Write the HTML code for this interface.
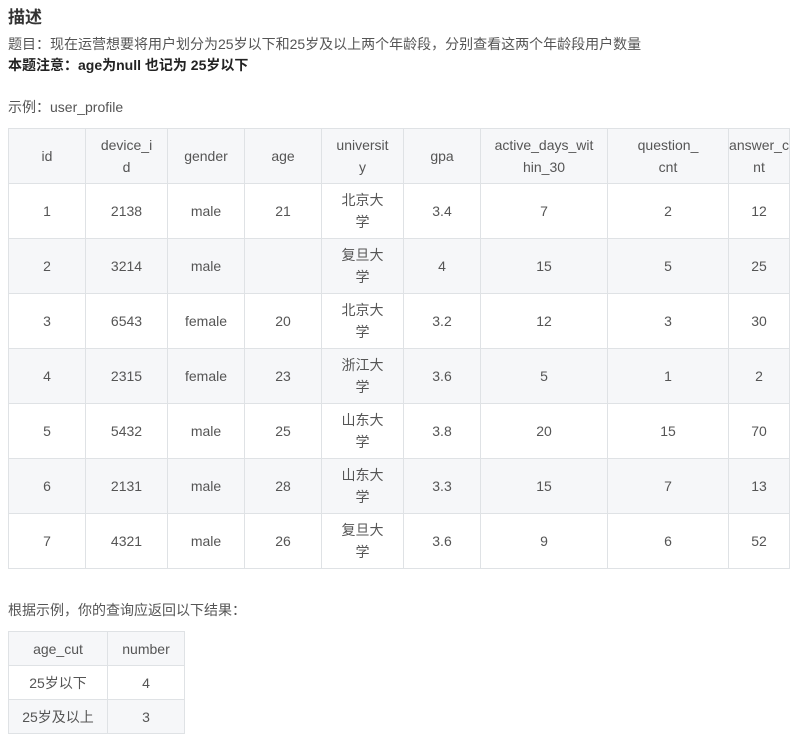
<!DOCTYPE html>
<html><head><meta charset="utf-8"><style>
body{margin:0;background:#fff;font-family:"Liberation Sans","Noto Sans CJK SC",sans-serif;color:#555;font-size:14px}
.t{position:absolute;left:8px;white-space:nowrap}
table{position:absolute;left:8px;border-collapse:collapse;table-layout:fixed}
td{border:1px solid #dfe2e5;text-align:center;padding:0;line-height:22px;color:#555;font-size:14px;overflow:hidden;white-space:nowrap}
tr.s td{background:#f6f7f9}
#a tr{height:55px}
#b tr{height:34px}
</style></head><body>
<div class="t" style="top:3px;font-size:17px;font-weight:bold;color:#333">描述</div>
<div class="t" style="top:34px">题目：现在运营想要将用户划分为25岁以下和25岁及以上两个年龄段，分别查看这两个年龄段用户数量</div>
<div class="t" style="top:55px;font-weight:bold;color:#222">本题注意：age为null 也记为 25岁以下</div>
<div class="t" style="top:97px">示例：user_profile</div>
<table id="a" style="top:128px;width:781px">
<colgroup><col style="width:77px"><col style="width:82px"><col style="width:77px"><col style="width:77px"><col style="width:82px"><col style="width:77px"><col style="width:127px"><col style="width:121px"><col style="width:61px"></colgroup>
<tr class="s"><td>id</td><td>device_i<br>d</td><td>gender</td><td>age</td><td>universit<br>y</td><td>gpa</td><td>active_days_wit<br>hin_30</td><td>question_<br>cnt</td><td>answer_c<br>nt</td></tr>
<tr><td>1</td><td>2138</td><td>male</td><td>21</td><td>北京大<br>学</td><td>3.4</td><td>7</td><td>2</td><td>12</td></tr>
<tr class="s"><td>2</td><td>3214</td><td>male</td><td></td><td>复旦大<br>学</td><td>4</td><td>15</td><td>5</td><td>25</td></tr>
<tr><td>3</td><td>6543</td><td>female</td><td>20</td><td>北京大<br>学</td><td>3.2</td><td>12</td><td>3</td><td>30</td></tr>
<tr class="s"><td>4</td><td>2315</td><td>female</td><td>23</td><td>浙江大<br>学</td><td>3.6</td><td>5</td><td>1</td><td>2</td></tr>
<tr><td>5</td><td>5432</td><td>male</td><td>25</td><td>山东大<br>学</td><td>3.8</td><td>20</td><td>15</td><td>70</td></tr>
<tr class="s"><td>6</td><td>2131</td><td>male</td><td>28</td><td>山东大<br>学</td><td>3.3</td><td>15</td><td>7</td><td>13</td></tr>
<tr><td>7</td><td>4321</td><td>male</td><td>26</td><td>复旦大<br>学</td><td>3.6</td><td>9</td><td>6</td><td>52</td></tr>
</table>
<div class="t" style="top:600px">根据示例，你的查询应返回以下结果：</div>
<table id="b" style="top:631px;width:176px">
<colgroup><col style="width:99px"><col style="width:77px"></colgroup>
<tr class="s"><td>age_cut</td><td>number</td></tr>
<tr><td>25岁以下</td><td>4</td></tr>
<tr class="s"><td>25岁及以上</td><td>3</td></tr>
</table>
</body></html>
